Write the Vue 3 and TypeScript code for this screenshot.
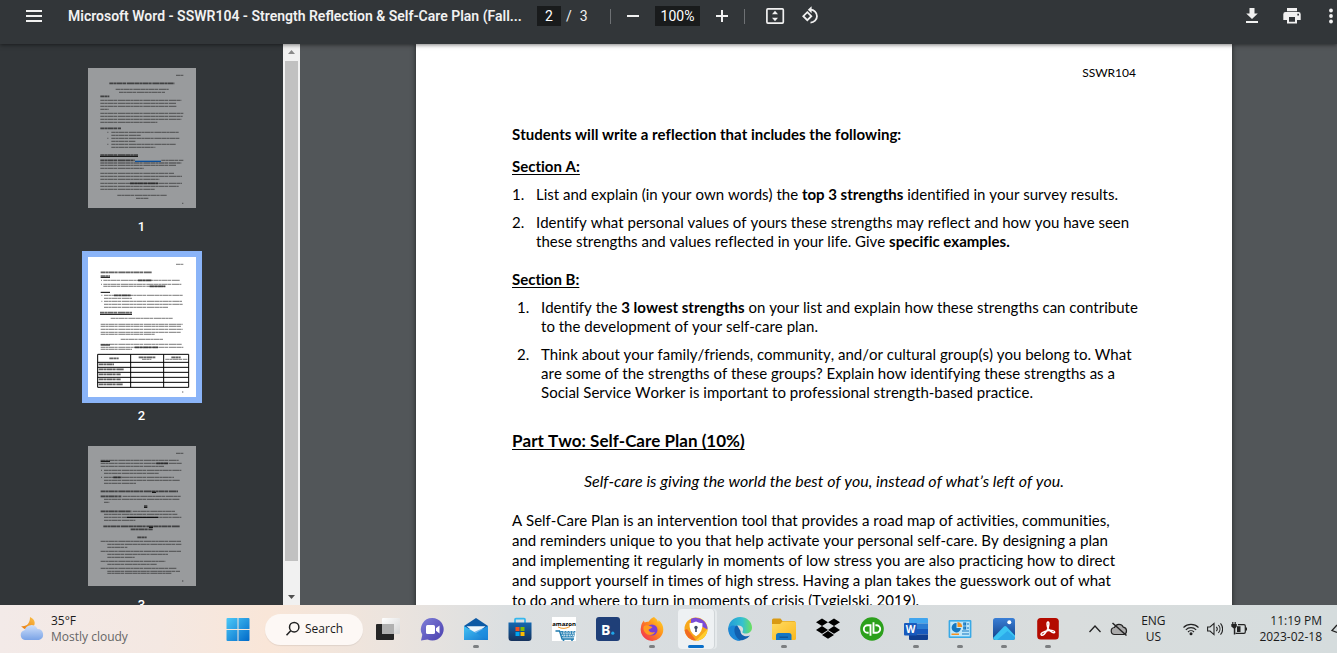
<script setup lang="ts">
import { ref } from 'vue'

type Kind = 'n' | 'b' | 'u' | 'k'
type Row = [x1: number, x2: number, y: number, kind?: Kind]

interface Thumb {
  page: number
  rows: Row[]
  grid?: boolean
}

const currentPage = ref('2')
const zoom = ref('100%')

// Rows are drawn on a 324 x 420 sheet: n = text, b = bold text, u = underline, k = link
const thumbs: Thumb[] = [
  {
    page: 1,
    rows: [
      [264, 286, 22], [64, 259, 46, 'b'], [83, 242, 64], [93, 231, 73], [37, 64, 85, 'b'],
      [37, 280, 97], [37, 264, 106], [37, 266, 115], [37, 62, 124],
      [37, 286, 136], [37, 284, 145], [37, 280, 154], [37, 208, 163], [37, 99, 181, 'b'],
      [58, 61, 193], [70, 272, 193], [70, 158, 202], [58, 61, 211], [70, 276, 211], [70, 142, 220],
      [58, 61, 229], [70, 264, 229], [70, 202, 238], [37, 150, 261, 'b'], [36, 150, 265, 'u'],
      [37, 140, 277, 'b'], [220, 286, 277], [141, 219, 280, 'k'], [37, 280, 285], [37, 264, 292], [37, 168, 301],
      [37, 258, 316], [37, 282, 325], [37, 214, 334], [37, 282, 346], [126, 210, 346, 'b'],
      [37, 272, 355], [37, 200, 364], [88, 236, 382], [144, 181, 391], [282, 286, 406],
    ],
  },
  {
    page: 2,
    grid: true,
    rows: [
      [264, 286, 22], [38, 192, 46, 'b'], [38, 66, 57, 'b'], [38, 66, 61, 'u'],
      [39, 42, 70], [46, 276, 70], [150, 190, 70, 'b'], [39, 42, 82], [46, 280, 82], [46, 232, 88], [185, 232, 88, 'b'],
      [38, 66, 106, 'u'], [40, 43, 115], [48, 284, 115], [78, 128, 115, 'b'], [48, 132, 124],
      [40, 43, 133], [48, 282, 133], [48, 284, 142], [48, 240, 151],
      [36, 132, 167, 'b'], [36, 132, 172, 'u'], [68, 254, 184],
      [38, 284, 202], [38, 280, 208], [38, 284, 217], [38, 278, 226], [38, 200, 232],
      [98, 226, 247], [38, 282, 262], [38, 66, 264, 'u'], [38, 286, 271], [140, 210, 271, 'b'], [38, 132, 277],
      [64, 92, 304, 'b'], [152, 202, 301, 'b'], [162, 190, 307], [250, 278, 301, 'b'], [232, 298, 307],
      [32, 78, 322, 'b'], [32, 108, 337, 'b'], [32, 98, 352, 'b'], [32, 98, 367, 'b'], [32, 104, 382, 'b'],
      [282, 286, 405],
    ],
  },
  {
    page: 3,
    rows: [
      [264, 286, 22], [38, 272, 43], [38, 66, 46, 'u'], [38, 282, 52], [205, 240, 52, 'b'], [38, 228, 61],
      [39, 42, 73], [48, 280, 73], [48, 212, 82], [39, 42, 94], [48, 258, 94], [76, 100, 94, 'b'], [48, 276, 103], [48, 144, 112],
      [38, 270, 136, 'b'], [192, 204, 139, 'u'], [38, 100, 151, 'b'], [104, 278, 151], [48, 274, 160], [48, 64, 169],
      [168, 178, 180, 'b'], [168, 178, 184, 'u'], [38, 130, 196, 'b'], [134, 262, 196], [48, 268, 205],
      [48, 280, 214], [117, 210, 214, 'u'], [48, 142, 223], [46, 276, 241, 'b'], [183, 195, 244, 'u'], [128, 194, 250, 'b'],
      [148, 176, 274, 'b'], [38, 280, 286], [58, 280, 295], [58, 118, 304], [38, 280, 316], [58, 240, 325], [58, 140, 334],
      [38, 232, 346], [58, 206, 355], [38, 266, 367], [58, 276, 376], [58, 250, 382], [282, 286, 405],
    ],
  },
]
</script>

<template>
  <div class="screen">
    <header class="toolbar">
      <button class="tool menu" aria-label="Menu">
        <svg width="24" height="24" viewBox="0 0 24 24"><path fill="currentColor" d="M4 6h16v2H4zM4 11h16v2H4zM4 16h16v2H4z" /></svg>
      </button>
      <h1 class="title">Microsoft Word - SSWR104 - Strength Reflection &amp; Self-Care Plan (Fall...</h1>
      <div class="pager">
        <input v-model="currentPage" class="field page-field" aria-label="Page number" />
        <span class="slash">/</span><span>3</span>
      </div>
      <span class="rule"></span>
      <div class="zoomer">
        <button class="tool" aria-label="Zoom out">
          <svg width="20" height="20" viewBox="0 0 20 20"><path fill="currentColor" d="M4 9h12v2H4z" /></svg>
        </button>
        <input v-model="zoom" class="field zoom-field" aria-label="Zoom level" />
        <button class="tool" aria-label="Zoom in">
          <svg width="20" height="20" viewBox="0 0 20 20"><path fill="currentColor" d="M4 9h5V4h2v5h5v2h-5v5H9v-5H4z" /></svg>
        </button>
      </div>
      <span class="rule"></span>
      <div class="fitters">
        <button class="tool" aria-label="Fit to page">
          <svg width="20" height="20" viewBox="0 0 20 20"><rect x="1.9" y="2.9" width="16.4" height="14.2" rx="1" fill="none" stroke="currentColor" stroke-width="1.7" /><path fill="currentColor" d="M10 4.8l3 3.4H7zM10 15.2l3-3.4H7z" /></svg>
        </button>
        <button class="tool" aria-label="Rotate counterclockwise">
          <svg width="20" height="20" viewBox="0 0 20 20"><g fill="none" stroke="currentColor" stroke-width="1.8"><path d="M6.3 6.2l4 4-4 4-4-4z" /><path d="M9.5 3.7a6.3 6.3 0 1 1 0 12.9" /></g><path fill="currentColor" d="M10.6.2v7L6.8 3.7z" /></svg>
        </button>
      </div>
      <div class="actions">
        <button class="tool" aria-label="Download">
          <svg width="20" height="20" viewBox="0 0 20 20"><path fill="currentColor" d="M7.5 2h5v5.5h3.3L10 13 4.200 7.500h3.300zM4 15h12v2H4z" /></svg>
        </button>
        <button class="tool" aria-label="Print">
          <svg width="20" height="20" viewBox="0 0 20 20"><path fill="currentColor" fill-rule="evenodd" d="M5 2h10v3.200H5zM3.500 6h13A2.200 2.200 0 0 1 18.700 8.200V14H15v3.500H5V14H1.300V8.200A2.200 2.200 0 0 1 3.500 6zM7 11v4.800h6V11zM15.300 7.800v1.700H17V7.800z" /></svg>
        </button>
        <button class="tool more" aria-label="More actions">
          <svg width="12" height="20" viewBox="0 0 12 20"><g fill="currentColor"><circle cx="6" cy="4.500" r="1.900" /><circle cx="6" cy="10" r="1.900" /><circle cx="6" cy="15.500" r="1.900" /></g></svg>
        </button>
      </div>
    </header>

    <div class="viewer">
      <nav class="sidebar" aria-label="Page thumbnails">
        <div class="thumbs">
          <a
            v-for="t in thumbs"
            :key="t.page"
            :href="'#page-' + t.page"
            class="thumb"
            :class="{ active: t.page === 2 }"
          >
            <svg class="sheet" viewBox="0 0 324 420" aria-hidden="true">
              <path v-for="(r, i) in t.rows" :key="i" :class="['row', r[3] ?? 'n']" :d="`M${r[0]} ${r[2]}H${r[1]}`" />
              <path v-if="t.grid" class="grid" d="M29 292H302V391H29ZM29 316H302M29 331H302M29 346H302M29 361H302M29 376H302M128 292V391M227 292V391" />
            </svg>
            <span class="num">{{ t.page }}</span>
          </a>
        </div>
        <div class="scrollbar">
          <svg width="17" height="17" viewBox="0 0 17 17"><path fill="#8a8a8a" d="M5 10h7L8.500 6z" /></svg>
          <div class="grip"></div>
          <svg width="17" height="17" viewBox="0 0 17 17"><path fill="#505050" d="M5 7h7l-3.500 4z" /></svg>
        </div>
      </nav>

      <main class="canvas">
        <article id="page-2" class="page">
          <p class="running">SSWR104</p>
          <p class="lead"><b>Students will write a reflection that includes the following:</b></p>
          <h2>Section A:</h2>
          <ol class="list">
            <li><span>List and explain (in your own words) the <b>top 3 strengths</b> identified in your survey results.</span></li>
            <li><span>Identify what personal values of yours these strengths may reflect and how you have seen<br />these strengths and values reflected in your life. Give <b>specific examples.</b></span></li>
          </ol>
          <h2>Section B:</h2>
          <ol class="list inset">
            <li><span>Identify the <b>3 lowest strengths</b> on your list and explain how these strengths can contribute<br />to the development of your self-care plan.</span></li>
            <li><span>Think about your family/friends, community, and/or cultural group(s) you belong to. What<br />are some of the strengths of these groups? Explain how identifying these strengths as a<br />Social Service Worker is important to professional strength-based practice.</span></li>
          </ol>
          <h2 class="part">Part Two: Self-Care Plan (10%)</h2>
          <p class="quote">Self-care is giving the world the best of you, instead of what’s left of you.</p>
          <p class="body">A Self-Care Plan is an intervention tool that provides a road map of activities, communities,<br />and reminders unique to you that help activate your personal self-care. By designing a plan<br />and implementing it regularly in moments of low stress you are also practicing how to direct<br />and support yourself in times of high stress. Having a plan takes the guesswork out of what<br />to do and where to turn in moments of crisis (Tygielski, 2019).</p>
        </article>
      </main>
    </div>

    <footer class="taskbar">
      <button class="weather">
        <svg width="26" height="26" viewBox="0 0 26 26">
          <defs>
            <linearGradient id="moon" x1="0" y1="1" x2="1" y2="0"><stop offset="0" stop-color="#e8770c" /><stop offset="1" stop-color="#fbc34a" /></linearGradient>
            <linearGradient id="cloud" x1="0" y1="0" x2="0" y2="1"><stop offset="0" stop-color="#cfe0fb" /><stop offset="1" stop-color="#7aa3e6" /></linearGradient>
          </defs>
          <path fill="url(#moon)" d="M11 1c5 2 6 7 3 10s-8 4-12-1c5 1 9-2 9-9z" />
          <path fill="url(#cloud)" d="M6 24a5 5 0 0 1-.5-9.800A7 7 0 0 1 18.500 13 5.600 5.600 0 0 1 20 24z" />
        </svg>
        <span class="stack"><span>35°F</span><span class="dim">Mostly cloudy</span></span>
      </button>

      <div class="apps">
        <button class="app" aria-label="Start">
          <svg viewBox="0 0 24 24">
            <defs><linearGradient id="win" x1="0" y1="0" x2="1" y2="1"><stop offset="0" stop-color="#4cc9f8" /><stop offset="1" stop-color="#0069c8" /></linearGradient></defs>
            <path fill="url(#win)" d="M.5 2a1 1 0 0 1 1-1h10v11H.5zM12.500 1h10a1 1 0 0 1 1 1v10h-11zM.5 13h11v11h-10a1 1 0 0 1-1-1zM12.500 13h11v10a1 1 0 0 1-1 1h-10z" />
          </svg>
        </button>
        <button class="search">
          <svg width="16" height="16" viewBox="0 0 16 16"><g fill="none" stroke="#222" stroke-width="1.500"><circle cx="9.200" cy="6.200" r="4.700" /><path d="M5.700 9.700L1.500 14.200" /></g></svg>
          Search
        </button>
        <button class="app" aria-label="Task view">
          <svg viewBox="0 0 24 24">
            <defs><linearGradient id="tv" x1="0" y1="0" x2="1" y2="1"><stop offset="0" stop-color="#fff" /><stop offset="1" stop-color="#d4d4d4" /></linearGradient></defs>
            <rect x="0" y="7" width="18" height="16" rx="1" fill="#252525" /><rect x="6" y="1" width="18" height="16" rx="1" fill="url(#tv)" /><path fill="#b0b0b0" d="M6 7h12v10H6z" />
          </svg>
        </button>
        <button class="app" aria-label="Chat">
          <svg viewBox="0 0 24 24">
            <defs><linearGradient id="chat" x1="0" y1="0" x2="1" y2="1"><stop offset="0" stop-color="#7f7fd8" /><stop offset="1" stop-color="#4a3fae" /></linearGradient></defs>
            <path fill="url(#chat)" d="M12.500 1a11.300 11.300 0 1 1-5 21.500L1 23.600l1.300-5.800A11.300 11.300 0 0 1 12.500 1z" />
            <rect x="6" y="8" width="9" height="9" rx="1.500" fill="#fff" /><path fill="#fff" d="M16 11.300L19.500 8.500v8L16 13.800z" />
          </svg>
        </button>
        <button class="app running-app" aria-label="Mail">
          <svg viewBox="0 0 24 24">
            <defs><linearGradient id="mail" x1="0" y1="0" x2="1" y2="1"><stop offset="0" stop-color="#45c4f5" /><stop offset="1" stop-color="#1479d0" /></linearGradient></defs>
            <path fill="#0c59a4" d="M0 9L12 1l12 8v3H0z" /><path fill="#eef6fb" d="M2.500 9.300h19L12 17z" /><path fill="url(#mail)" d="M0 9l12 7 12-7v14H0z" /><path fill="#1b8be0" opacity=".6" d="M24 9v14L10 15z" />
          </svg>
        </button>
        <button class="app" aria-label="Microsoft Store">
          <svg viewBox="0 0 24 24">
            <defs><linearGradient id="store" x1="0" y1="0" x2="0" y2="1"><stop offset="0" stop-color="#1467b0" /><stop offset="1" stop-color="#16325c" /></linearGradient></defs>
            <path fill="none" stroke="#35b7ee" stroke-width="1.800" d="M7 7V2.700a1 1 0 0 1 1-1h8a1 1 0 0 1 1 1V7" /><path fill="url(#store)" d="M.5 5.500h23V21a3 3 0 0 1-3 3h-17a3 3 0 0 1-3-3z" />
            <path fill="#f25022" d="M7.500 10H11.500v4H7.500z" /><path fill="#7fba00" d="M12.500 10h4v4h-4z" /><path fill="#00a4ef" d="M7.500 15h4v4h-4z" /><path fill="#ffb900" d="M12.500 15h4v4h-4z" />
          </svg>
        </button>
        <button class="app" aria-label="Amazon">
          <svg viewBox="0 0 24 24">
            <path fill="#fff" d="M0 0h24v24H0z" /><text x="12" y="8.500" text-anchor="middle" class="amz">amazon</text><path fill="none" stroke="#f29a2e" stroke-width="1" d="M6 10q6 3 12-.5" />
            <path fill="none" stroke="#1a78ad" stroke-width="1.300" d="M3.500 14h4l2.500 8h12" /><path fill="#2f86b7" d="M8 14h15.500l-1.500 6.500H10z" /><path stroke="#fff" stroke-width=".9" stroke-dasharray="1.200 1" d="M9 16h14M10 18.300h12M12 14v6M15 14v6M18 14v6M21 14v6" /><circle cx="11.500" cy="23" r="1" fill="#1a78ad" /><circle cx="20" cy="23" r="1" fill="#1a78ad" />
          </svg>
        </button>
        <button class="app" aria-label="Booking">
          <svg viewBox="0 0 24 24"><rect width="24" height="24" rx="3" fill="#1f3f78" /><text x="5" y="17.500" class="bk">B</text><circle cx="16.800" cy="16.200" r="1.600" fill="#1fa5e8" /></svg>
        </button>
        <button class="app running-app" aria-label="Firefox">
          <svg viewBox="0 0 24 24">
            <defs><linearGradient id="fox" x1="1" y1="0" x2="0" y2="1"><stop offset="0" stop-color="#ffe226" /><stop offset=".45" stop-color="#ff8a1d" /><stop offset="1" stop-color="#f0205c" /></linearGradient></defs>
            <path fill="url(#fox)" d="M14 0c2 1.500 3.500 3 4 5 .5-.5.6-1.200.5-2 3.500 3 4.800 6 4.800 9.500A11.300 11.300 0 1 1 1 10c.2-3 1.500-5 3-6.500 0 1 .3 1.500.8 2 1-.8 2.500-1 3.700-.7C10 2.500 12 .8 14 0z" />
            <circle cx="12" cy="13" r="5.500" fill="#7a3fd6" /><path fill="#ff9a22" d="M4 9c3-2 6 0 8.500 1-1 2-3.500 1.500-4 3 1 2.500 4 3 6.500 2-1.500 3.500-7 4-9.500 1S3 11 4 9z" />
          </svg>
        </button>
        <button class="app focused" aria-label="AVG Secure Browser">
          <svg viewBox="0 0 24 24">
            <circle cx="12" cy="12" r="11.500" fill="#f7a81b" /><path fill="#7b4bd8" d="M7 2a11.500 11.500 0 0 1 16.500 10.500L17 9 7 6z" /><path fill="#f26b21" d="M.6 13A11.500 11.500 0 0 0 12 23.500l-3-4L3 12z" /><path fill="#ffce2e" d="M23.500 12A11.500 11.500 0 0 1 12 23.500l6-6z" />
            <path fill="#fff" d="M12 4.500q3 1.500 6.500 1.800.6 9-6.500 13-7.100-4-6.500-13Q9 6 12 4.500z" /><circle cx="12" cy="10.500" r="1.700" fill="#3d4a66" /><path fill="#3d4a66" d="M11.200 11h1.600v4h-1.600z" />
          </svg>
        </button>
        <button class="app" aria-label="Edge">
          <svg viewBox="0 0 24 24">
            <defs><linearGradient id="edge" x1="0" y1="0" x2="1" y2="0"><stop offset="0" stop-color="#239bd8" /><stop offset=".6" stop-color="#35c1cf" /><stop offset="1" stop-color="#6be05c" /></linearGradient></defs>
            <path fill="#1160b0" d="M.4 11A12 12 0 0 0 22 18.500c-4 2-9.500 0-9.500-4.500L9 8z" /><path fill="url(#edge)" d="M.3 12A11.800 11.800 0 0 1 12 0c7 0 12 5 12 10.500 0 4-3 6-6.500 6-3 0-3.500-1.200-2.800-2.200 1-1.500.5-5.800-4.200-5.800C6 8.500 1 9.500.3 12z" /><path fill="#1b86d6" d="M.3 12C1 9 4 7.700 8 8.800 5 12 6 20 13 23.800 6 24.500 0 19 .3 12z" />
          </svg>
        </button>
        <button class="app running-app" aria-label="File Explorer">
          <svg viewBox="0 0 24 24">
            <defs><linearGradient id="fold" x1="0" y1="0" x2="1" y2="1"><stop offset="0" stop-color="#ffdc63" /><stop offset="1" stop-color="#fbb81d" /></linearGradient></defs>
            <path fill="#d99a14" d="M0 3a1.500 1.500 0 0 1 1.500-1.500h7L10.500 4H22a1.500 1.500 0 0 1 1.500 1.500V10H0z" /><path fill="url(#fold)" d="M0 7h8l2.500-2.500H22.500A1.500 1.500 0 0 1 24 6v15.500a1.500 1.500 0 0 1-1.500 1.500h-21A1.500 1.500 0 0 1 0 21.500z" /><path fill="#1576c4" d="M4 18.500a2.500 2.500 0 0 1 2.500-2.500h10.500a2.500 2.500 0 0 1 2.500 2.500V23H4z" /><path fill="#0f5699" d="M7.500 19.500h8.500V21H7.500z" />
          </svg>
        </button>
        <button class="app" aria-label="Dropbox">
          <svg viewBox="0 0 24 24"><path fill="#000" d="M6 1.500l6 3.800-6 3.800-6-3.800zM18 1.500l6 3.800-6 3.800-6-3.800zM6 9.100l6 3.800-6 3.800-6-3.800zM18 9.100l6 3.800-6 3.800-6-3.800zM12 14.100l6 3.800-6 3.800-6-3.800z" /></svg>
        </button>
        <button class="app" aria-label="QuickBooks">
          <svg viewBox="0 0 24 24"><circle cx="12" cy="12" r="11.800" fill="#2ca01c" /><g fill="none" stroke="#fff" stroke-width="1.900"><path d="M10.500 18.800V8.200H7.600a3.800 3.800 0 0 0 0 7.600h1" /><path d="M13.500 5.200v10.600h2.900a3.800 3.800 0 0 0 0-7.600h-1" /></g></svg>
        </button>
        <button class="app running-app" aria-label="Word">
          <svg viewBox="0 0 24 24"><path fill="#41a5ee" d="M6 1h17a1 1 0 0 1 1 1v4.500H5V2a1 1 0 0 1 1-1z" /><path fill="#2b7cd3" d="M5 6.500h19V12H5z" /><path fill="#185abd" d="M5 12h19v5.500H5z" /><path fill="#103f91" d="M5 17.500h19V22a1 1 0 0 1-1 1H6a1 1 0 0 1-1-1z" /><rect y="6" width="13" height="12.500" rx="1" fill="#185abd" /><text x="6.500" y="15.800" text-anchor="middle" class="wd">W</text></svg>
        </button>
        <button class="app running-app" aria-label="Control Panel">
          <svg viewBox="0 0 24 24"><rect x=".6" y="3" width="22.800" height="18" rx="1" fill="#39a9e6" /><rect x="2.200" y="4.600" width="19.600" height="14.800" fill="#bfe7fa" /><path fill="#1577c0" d="M8.500 6A4.700 4.700 0 1 0 13 11H8.500z" /><path fill="#f59120" d="M9.500 5v5h4.700A5 5 0 0 0 9.500 5z" /><g stroke="#1577c0" stroke-width="1.200" fill="none"><rect x="15.800" y="6" width="1.800" height="2" /><rect x="15.800" y="10" width="1.800" height="2" /><path d="M19 7h2M19 11h2M14 14h7M14 17h7" /></g><path fill="#f59120" d="M3.500 16.500H11V18H3.500z" /></svg>
        </button>
        <button class="app running-app" aria-label="Photos">
          <svg viewBox="0 0 24 24">
            <defs><linearGradient id="ph" x1="0" y1="0" x2="0" y2="1"><stop offset="0" stop-color="#3a7fd6" /><stop offset="1" stop-color="#123f86" /></linearGradient></defs>
            <rect x="1" y="1" width="22" height="22" rx="2.500" fill="url(#ph)" /><path fill="#3bc4f3" d="M1 21L12 9.500a1.700 1.700 0 0 1 2.400 0L23 18.500V20.500a2.500 2.500 0 0 1-2.500 2.500h-17A2.500 2.500 0 0 1 1 21z" /><path fill="#1f8de0" d="M5 23l10.500-9 7.500 6.500-.6 1.500-1.900 1z" opacity=".5" /><circle cx="17.300" cy="5.200" r="2" fill="#fff" />
          </svg>
        </button>
        <button class="app running-app" aria-label="Acrobat">
          <svg viewBox="0 0 24 24"><rect x="1.200" y="1" width="21.600" height="21.600" rx="3.500" fill="#b30b00" /><path fill="none" stroke="#fff" stroke-width="1.500" stroke-linejoin="round" d="M5.300 18c-1.600-1.600 3.400-4 7.200-4.500 3-.4 6.500.2 6.200 1.700-.5 1.700-5-1-6.400-3.400C10.900 9.500 10.500 5 12 5s1 4.500-.8 8c-1.600 3-4.400 6.300-5.900 5z" /></svg>
        </button>
      </div>

      <div class="tray">
        <button class="tray-btn" aria-label="Show hidden icons"><svg width="16" height="16" viewBox="0 0 16 16"><path fill="none" stroke="#222" stroke-width="1.300" d="M2.500 11L8 5l5.500 6" /></svg></button>
        <button class="tray-btn" aria-label="OneDrive"><svg width="18" height="16" viewBox="0 0 18 16"><path fill="#aaa" stroke="#222" stroke-width="1.200" d="M5 13.500a3.500 3.500 0 0 1-.5-7 4.800 4.800 0 0 1 8.800-.3A3.700 3.700 0 0 1 13.500 13.500z" /><path stroke="#222" stroke-width="1.500" d="M2.500 2l14 12.500" /></svg></button>
        <button class="lang stack"><span>ENG</span><span>US</span></button>
        <button class="status" aria-label="Network, volume and battery">
          <svg width="16" height="16" viewBox="0 0 16 16"><g fill="none" stroke="#222" stroke-width="1.100"><path d="M.5 6.500a10.600 10.600 0 0 1 15 0M2.800 8.800a7.400 7.400 0 0 1 10.400 0M5 11a4.300 4.300 0 0 1 6 0" /></g><circle cx="8" cy="12.700" r="1.500" fill="#222" /></svg>
          <svg width="16" height="16" viewBox="0 0 16 16"><g fill="none" stroke="#222" stroke-width="1.100"><path d="M.6 6H3l4-3.600v11.200L3 10H.6z" /><path d="M9.300 5.800a3.300 3.300 0 0 1 0 4.400M11.400 4a6 6 0 0 1 0 8M13.500 2.400a8.400 8.400 0 0 1 0 11.200" /></g></svg>
          <svg width="16" height="16" viewBox="0 0 16 16"><path fill="none" stroke="#222" stroke-width="1.200" d="M7 3.700h6a1.300 1.300 0 0 1 1.300 1.300v6a1.300 1.300 0 0 1-1.300 1.300H4.500" /><path fill="#222" d="M14.500 6.500H16v3h-1.500zM1.200 1h1.200v2h1.200V1h1.200v2h1v2.500L4.300 7.500v6H2.800v-6L.3 5.500V3h.9zM6 5.200h3.500V11H6z" /></svg>
        </button>
        <button class="clock stack"><span>11:19 PM</span><span>2023-02-18</span></button>
        <button class="bell" aria-label="Notifications"><svg width="8" height="16" viewBox="0 0 8 16"><path fill="none" stroke="#222" stroke-width="1.300" d="M8 4L3 9.500l5 2" /></svg></button>
      </div>
    </footer>
  </div>
</template>

<style>
body {
  margin: 0;
}
</style>

<style scoped>
* {
  box-sizing: border-box;
}
button {
  padding: 0;
  border: 0;
  background: none;
  color: inherit;
  font: inherit;
}
svg {
  display: block;
  flex: none;
}
.screen {
  display: flex;
  flex-direction: column;
  height: 100vh;
  overflow: hidden;
}

.toolbar {
  position: relative;
  z-index: 1;
  flex: none;
  display: flex;
  align-items: center;
  height: 44px;
  padding: 0 0 12px 22px;
  background: #323639;
  color: #f1f1f1;
  font: 14px Roboto, sans-serif;
  box-shadow: 0 1px 4px rgba(0, 0, 0, 0.5);
}
.title {
  width: 446px;
  margin: 0 23px 0 22px;
  font-size: 14px;
  font-weight: 600;
  white-space: nowrap;
}
.pager {
  display: flex;
  align-items: center;
  width: 73px;
}
.field {
  height: 20px;
  padding: 0;
  border: 0;
  background: #191b1c;
  color: #fff;
  font: 14px Roboto, sans-serif;
  text-align: center;
}
.page-field {
  width: 24px;
}
.slash {
  margin: 0 8px 0 5px;
}
.rule {
  width: 1px;
  height: 15px;
  background: #6e7174;
}
.zoomer {
  display: flex;
  align-items: center;
  gap: 12px;
  margin: 0 12px;
}
.zoom-field {
  width: 45px;
}
.fitters {
  display: flex;
  gap: 16px;
  margin-left: 20px;
}
.actions {
  display: flex;
  gap: 20px;
  margin-left: auto;
}
.more {
  margin-left: 3px;
}

.viewer {
  flex: 1;
  display: flex;
  min-height: 0;
  background: #525659;
}
.sidebar {
  flex: none;
  display: flex;
  width: 300px;
  background: #323639;
  overflow: hidden;
}
.thumbs {
  flex: 1;
  display: flex;
  flex-direction: column;
  align-items: center;
  gap: 17px;
  padding-top: 18px;
}
.thumb {
  flex: none;
  display: flex;
  flex-direction: column;
  align-items: center;
  gap: 4px;
  color: #fff;
  font: 500 13px/14px Roboto, sans-serif;
  text-decoration: none;
}
.sheet {
  box-sizing: content-box;
  width: 108px;
  height: 140px;
  border: 6px solid transparent;
  background: #999b9d;
  background-clip: padding-box;
}
.active .sheet {
  border-color: #8ab4f8;
  background-color: #fff;
}
.row {
  fill: none;
  stroke: #111;
  stroke-width: 4;
  stroke-dasharray: 13 1 8 1 17 1 10 2 22 1;
  opacity: 0.45;
}
.row.b {
  stroke-width: 5;
  opacity: 0.65;
}
.row.u {
  stroke: #000;
  stroke-width: 3;
  stroke-dasharray: none;
  opacity: 1;
}
.row.k {
  stroke: #0b4f9c;
  stroke-dasharray: none;
  opacity: 1;
}
.grid {
  fill: none;
  stroke: #000;
  stroke-width: 3;
}
.num {
  padding-top: 2px;
}
.scrollbar {
  display: flex;
  flex-direction: column;
  align-items: center;
  width: 17px;
  background: #f1f1f1;
}
.grip {
  flex: 1;
  width: 13px;
  margin-bottom: 27px;
  background: #c1c1c1;
}
.canvas {
  flex: 1;
  display: flex;
  justify-content: center;
  min-width: 0;
  padding-left: 11px;
  overflow: hidden;
}
.page {
  flex: none;
  width: 816px;
  height: 1056px;
  padding: 19px 96px 0;
  background: #fff;
  box-shadow: 0 0 5px rgba(0, 0, 0, 0.6);
  color: #000;
  font: 15px/19px Lato, sans-serif;
  font-variant-ligatures: none;
  font-kerning: none;
  white-space: nowrap;
}
.page p,
.page h2,
.list {
  margin: 0;
  padding: 0;
}
.page .running {
  font-size: 12px;
  text-align: right;
}
.page .lead {
  margin-top: 43px;
}
.page h2 {
  margin-top: 13px;
  font-size: 15px;
  font-weight: 700;
  text-decoration: underline;
  text-decoration-skip-ink: none;
  text-underline-offset: 2px;
}
.list {
  list-style: none;
  counter-reset: item;
}
.list li {
  display: flex;
  margin-top: 9px;
  counter-increment: item;
}
.list li::before {
  content: counter(item) '.';
  flex: none;
  width: 24px;
}
.page .inset {
  padding-left: 5px;
}
.page .list + h2 {
  margin-top: 19px;
}
.page .list + .part {
  margin-top: 29px;
  font-size: 17px;
}
.page .quote {
  margin-top: 21px;
  font-size: 16px;
  font-style: italic;
  text-align: center;
}
.page .body {
  margin-top: 20px;
  line-height: 20px;
}

.taskbar {
  position: relative;
  z-index: 1;
  flex: none;
  display: flex;
  align-items: center;
  height: 48px;
  background: linear-gradient(90deg, #f3eae8 0%, #f4e8e2 12%, #f9e6d8 20%, #ece4de 29%, #dbdfe1 38%, #d6dbde 60%, #d9dddd 80%, #d5dcdd 100%);
  color: #1b1b1b;
  font: 12px/16px 'Open Sans', sans-serif;
}
.weather {
  display: flex;
  align-items: center;
  gap: 6px;
  width: 216px;
  padding-left: 19px;
  text-align: left;
}
.stack {
  display: flex;
  flex-direction: column;
  white-space: nowrap;
}
.dim {
  color: #666;
}
.apps {
  display: flex;
  align-items: center;
}
.app {
  position: relative;
  display: flex;
  align-items: center;
  justify-content: center;
  width: 44px;
  height: 40px;
}
.app svg {
  width: 24px;
  height: 24px;
}
.running-app::after,
.focused::after {
  content: '';
  position: absolute;
  bottom: 1px;
  left: 50%;
  width: 6px;
  height: 3px;
  margin-left: -3px;
  border-radius: 2px;
  background: #7c7f81;
}
.focused {
  width: 36px;
  margin: 0 4px;
  border-radius: 4px;
  background: #eef1f3;
  box-shadow: 1px 0 #d0d5d8, 3px 0 #e6eaec;
}
.focused::after {
  width: 16px;
  margin-left: -8px;
  background: #0a6fc9;
}
.search {
  display: flex;
  align-items: center;
  justify-content: center;
  gap: 4px;
  width: 98px;
  height: 31px;
  margin: 0 3px 0 5px;
  border-radius: 16px;
  background: #fdf8f5;
  box-shadow: 0 1px 1px rgba(0, 0, 0, 0.08);
}
.amz {
  font: 700 6px 'Open Sans', sans-serif;
}
.bk {
  fill: #fff;
  font: 700 14px 'Open Sans', sans-serif;
}
.wd {
  fill: #fff;
  font: 700 10px 'Open Sans', sans-serif;
}
.tray {
  display: flex;
  align-items: center;
  margin-left: auto;
}
.tray-btn {
  display: flex;
  justify-content: center;
  width: 24px;
}
.lang {
  align-items: center;
  width: 44px;
}
.status {
  display: flex;
  gap: 8px;
  margin: 0 12px 0 8px;
}
.clock {
  align-items: flex-end;
}
.bell {
  margin-left: 7px;
}
</style>
